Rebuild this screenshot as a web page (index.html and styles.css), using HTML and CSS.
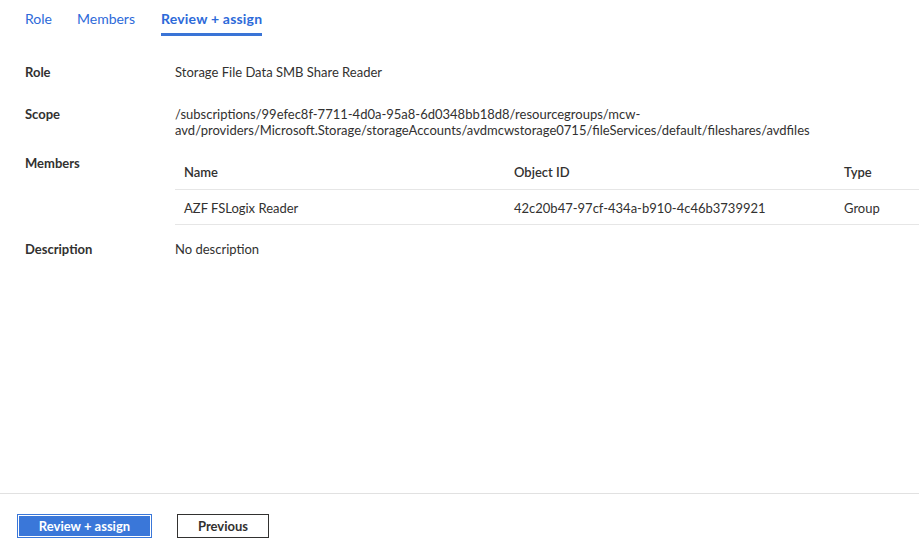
FILE: index.html
```html
<!DOCTYPE html>
<html lang="en">
<head>
<meta charset="utf-8">
<title>Add role assignment</title>
<link rel="stylesheet" href="styles.css">
</head>
<body>
<div class="page">
  <nav class="tabs">
    <a class="tab">Role</a>
    <a class="tab">Members</a>
    <a class="tab active">Review + assign</a>
  </nav>

  <main class="summary">
    <div class="row row-role">
      <div class="label">Role</div>
      <div class="value">Storage File Data SMB Share Reader</div>
    </div>
    <div class="row row-scope">
      <div class="label">Scope</div>
      <div class="value">/subscriptions/99efec8f-7711-4d0a-95a8-6d0348bb18d8/resourcegroups/mcw-avd/providers/Microsoft.Storage/storageAccounts/avdmcwstorage0715/fileServices/default/fileshares/avdfiles</div>
    </div>
    <div class="row row-members">
      <div class="label">Members</div>
      <div class="value table-wrap">
        <table class="members">
          <thead>
            <tr><th class="c-name">Name</th><th class="c-id">Object ID</th><th class="c-type">Type</th></tr>
          </thead>
          <tbody>
            <tr><td>AZF FSLogix Reader</td><td>42c20b47-97cf-434a-b910-4c46b3739921</td><td>Group</td></tr>
          </tbody>
        </table>
      </div>
    </div>
    <div class="row">
      <div class="label">Description</div>
      <div class="value">No description</div>
    </div>
  </main>

  <footer class="footer">
    <button class="btn btn-primary">Review + assign</button>
    <button class="btn btn-secondary">Previous</button>
  </footer>
</div>
</body>
</html>
```

FILE: styles.css
```css
* { box-sizing: border-box; }

html, body {
  margin: 0;
  padding: 0;
  background: #ffffff;
}

body {
  font-family: "Lato", "Open Sans", "Liberation Sans", sans-serif;
  font-size: 13px;
  color: #323130;
}

.page {
  min-height: 100vh;
  display: flex;
  flex-direction: column;
}

.tabs {
  display: flex;
  gap: 25px;
  padding: 0 25px;
  height: 36px;
}

.tab {
  font-size: 14px;
  color: #2d6ad9;
  line-height: 19px;
  padding-top: 9px;
  border-bottom: 3px solid transparent;
  height: 36px;
  cursor: pointer;
}

.tab.active {
  font-weight: 700;
  letter-spacing: 0.2px;
  border-bottom-color: #3a74d6;
  margin-left: 1px;
}

.summary {
  padding: 28px 0 0 25px;
}

.row {
  display: flex;
  line-height: 16px;
}

.row-role { margin-bottom: 26px; }
.row-scope { margin-bottom: 17px; }
.row-members { margin-bottom: 16px; }

.label {
  width: 150px;
  flex: none;
  font-weight: 700;
}

.value {
  flex: 1;
  min-width: 0;
}

.members {
  width: 100%;
  border-collapse: collapse;
}

.members th,
.members td {
  text-align: left;
  padding: 0 9px;
  border-bottom: 1px solid #e6e6e6;
}

.members th {
  font-weight: 600;
  height: 34px;
}

.members td {
  height: 35px;
  padding-top: 2px;
}

.members .c-name,
.members .c-id { width: 330px; }

.footer {
  margin-top: auto;
  border-top: 1px solid #e1e1e1;
  padding: 20px 17px 11px;
  display: flex;
  gap: 25px;
}

.btn {
  font-family: inherit;
  font-size: 13px;
  font-weight: 700;
  height: 24px;
  padding: 0;
  line-height: 20px;
  cursor: pointer;
}

.btn-primary {
  width: 135px;
  background: #3a77d9;
  color: #ffffff;
  border: 1px solid #3a77d9;
  box-shadow: inset 0 0 0 1px #ffffff;
}

.btn-secondary {
  width: 92px;
  background: #ffffff;
  color: #323130;
  border: 1px solid #323130;
}
```
